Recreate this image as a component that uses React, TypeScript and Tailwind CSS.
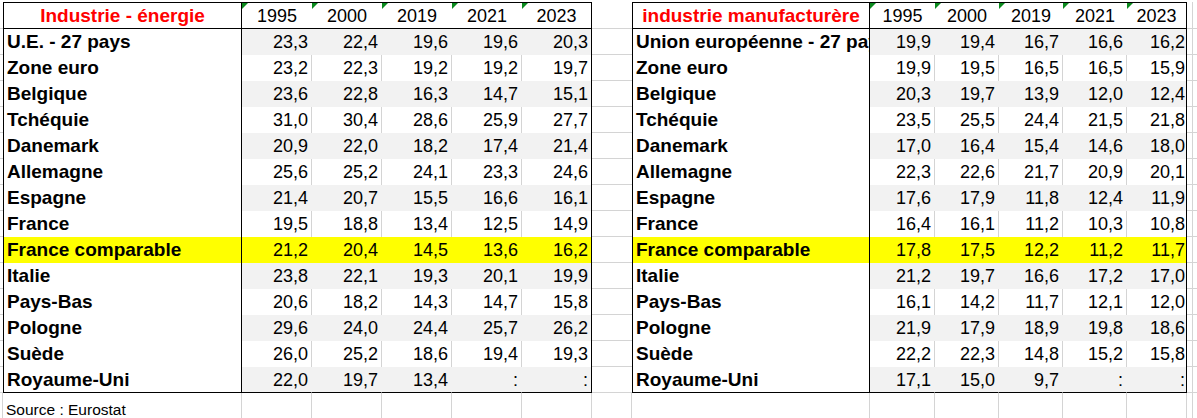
import React from "react"

type Row = { label: string; values: string[] }

const years = ["1995", "2000", "2019", "2021", "2023"]

const energie: Row[] = [
  { label: "U.E. - 27 pays", values: ["23,3", "22,4", "19,6", "19,6", "20,3"] },
  { label: "Zone euro", values: ["23,2", "22,3", "19,2", "19,2", "19,7"] },
  { label: "Belgique", values: ["23,6", "22,8", "16,3", "14,7", "15,1"] },
  { label: "Tchéquie", values: ["31,0", "30,4", "28,6", "25,9", "27,7"] },
  { label: "Danemark", values: ["20,9", "22,0", "18,2", "17,4", "21,4"] },
  { label: "Allemagne", values: ["25,6", "25,2", "24,1", "23,3", "24,6"] },
  { label: "Espagne", values: ["21,4", "20,7", "15,5", "16,6", "16,1"] },
  { label: "France", values: ["19,5", "18,8", "13,4", "12,5", "14,9"] },
  { label: "France comparable", values: ["21,2", "20,4", "14,5", "13,6", "16,2"] },
  { label: "Italie", values: ["23,8", "22,1", "19,3", "20,1", "19,9"] },
  { label: "Pays-Bas", values: ["20,6", "18,2", "14,3", "14,7", "15,8"] },
  { label: "Pologne", values: ["29,6", "24,0", "24,4", "25,7", "26,2"] },
  { label: "Suède", values: ["26,0", "25,2", "18,6", "19,4", "19,3"] },
  { label: "Royaume-Uni", values: ["22,0", "19,7", "13,4", ":", ":"] },
]

const manuf: Row[] = [
  { label: "Union européenne - 27 pays", values: ["19,9", "19,4", "16,7", "16,6", "16,2"] },
  { label: "Zone euro", values: ["19,9", "19,5", "16,5", "16,5", "15,9"] },
  { label: "Belgique", values: ["20,3", "19,7", "13,9", "12,0", "12,4"] },
  { label: "Tchéquie", values: ["23,5", "25,5", "24,4", "21,5", "21,8"] },
  { label: "Danemark", values: ["17,0", "16,4", "15,4", "14,6", "18,0"] },
  { label: "Allemagne", values: ["22,3", "22,6", "21,7", "20,9", "20,1"] },
  { label: "Espagne", values: ["17,6", "17,9", "11,8", "12,4", "11,9"] },
  { label: "France", values: ["16,4", "16,1", "11,2", "10,3", "10,8"] },
  { label: "France comparable", values: ["17,8", "17,5", "12,2", "11,2", "11,7"] },
  { label: "Italie", values: ["21,2", "19,7", "16,6", "17,2", "17,0"] },
  { label: "Pays-Bas", values: ["16,1", "14,2", "11,7", "12,1", "12,0"] },
  { label: "Pologne", values: ["21,9", "17,9", "18,9", "19,8", "18,6"] },
  { label: "Suède", values: ["22,2", "22,3", "14,8", "15,2", "15,8"] },
  { label: "Royaume-Uni", values: ["17,1", "15,0", "9,7", ":", ":"] },
]

// rangées grisées (les autres blanches, France comparable en jaune)
const grayRows = [0, 2, 4, 6, 9, 11, 13]
const yellowRow = 8

function Flag() {
  return (
    <svg className="absolute left-0 top-0" width="6" height="6" viewBox="0 0 6 6">
      <polygon points="0,0 6,0 0,6" fill="#0b8a1e" />
    </svg>
  )
}

function headerCells(title: string, key: string) {
  return [
    <div
      key={key + "-t"}
      className="border-y border-x border-black bg-white text-center font-bold text-[19px] text-[#ff0000] pt-[1px] leading-[24px] whitespace-nowrap overflow-hidden"
    >
      {title}
    </div>,
    ...years.map((y, i) => (
      <div
        key={key + "-" + y}
        className={
          i === years.length - 1
            ? "relative border-y border-r border-black bg-white text-center pt-[1px] leading-[24px]"
            : "relative border-y border-black bg-white text-center pt-[1px] leading-[24px]"
        }
      >
        <Flag />
        {y}
      </div>
    )),
  ]
}

function dataCells(row: Row, idx: number, key: string, lastPr: string) {
  const isYellow = idx === yellowRow
  const isGray = grayRows.includes(idx)
  const isLast = idx === 13
  const bg = isYellow ? "bg-[#ffff00]" : isGray ? "bg-[#f2f2f2]" : "bg-white"
  const fill = isYellow || isGray
  return [
    <div
      key={key + "-l"}
      className={
        (isYellow ? "bg-[#ffff00] " : "bg-white ") +
        (isLast ? "border-b border-b-black " : "") +
        "border-x border-black pl-[3px] font-bold text-[19px] pt-[1px] leading-[24px] whitespace-nowrap overflow-hidden"
      }
    >
      {row.label}
    </div>,
    ...row.values.map((v, i) => {
      const lastCol = i === row.values.length - 1
      return (
        <div
          key={key + "-" + i}
          className={
            bg +
            " border-r text-right pt-[1px] leading-[24px] " +
            (lastCol ? "border-r-black " + lastPr : fill ? "border-r-transparent pr-[3px]" : "border-r-[#d4d4d4] pr-[3px]") +
            (isLast ? " border-b border-b-black" : "")
          }
        >
          {v}
        </div>
      )
    }),
  ]
}

export default function App() {
  return (
    <div className="w-[1197px] h-[418px] overflow-hidden bg-white text-black text-[18px] font-['Liberation_Sans',Arial,sans-serif]">
      <div className="grid grid-cols-[3px_239px_70px_70px_70px_70px_70px_40px_238px_65px_64px_64px_64px_60px_6px_4px] grid-rows-[2px_27px_repeat(14,26px)_26px]">
        {/* rangée vide du haut */}
        <div className="col-span-full" />

        {/* en-têtes */}
        <div className="border-b border-[#d4d4d4]" />
        {headerCells("Industrie - énergie", "he")}
        <div className="border-b border-[#d4d4d4]" />
        {headerCells("industrie manufacturère", "hm")}
        <div className="border-b border-r border-[#d4d4d4]" />
        <div className="border-b border-[#d4d4d4]" />

        {/* données */}
        {energie.map((row, idx) => (
          <React.Fragment key={row.label}>
            <div className="border-b border-[#d4d4d4]" />
            {dataCells(row, idx, "e" + idx, "pr-[3px]")}
            <div className="border-b border-[#d4d4d4]" />
            {dataCells(manuf[idx], idx, "m" + idx, "pr-[1px]")}
            <div className="border-b border-r border-[#d4d4d4]" />
            <div className="border-b border-[#d4d4d4]" />
          </React.Fragment>
        ))}

        {/* source */}
        <div className="border-r border-[#d4d4d4]" />
        <div className="border-r border-[#d4d4d4] pl-[3px] text-[15.5px] leading-none flex items-end pb-[2px]">
          Source : Eurostat
        </div>
        <div className="border-r border-[#d4d4d4]" />
        <div className="border-r border-[#d4d4d4]" />
        <div className="border-r border-[#d4d4d4]" />
        <div className="border-r border-[#d4d4d4]" />
        <div className="border-r border-[#d4d4d4]" />
        <div className="border-r border-[#d4d4d4]" />
        <div className="border-r border-[#d4d4d4]" />
        <div className="border-r border-[#d4d4d4]" />
        <div className="border-r border-[#d4d4d4]" />
        <div className="border-r border-[#d4d4d4]" />
        <div className="border-r border-[#d4d4d4]" />
        <div className="border-r border-[#d4d4d4]" />
        <div className="border-r border-[#d4d4d4]" />
        <div />
      </div>
    </div>
  )
}
